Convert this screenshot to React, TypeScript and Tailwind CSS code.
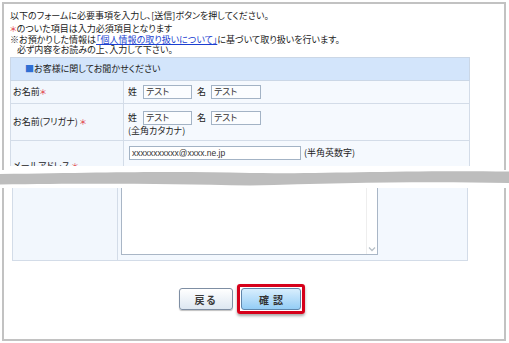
const jp = "font-['Noto_Sans_CJK_JP',sans-serif] [font-feature-settings:'palt']";

function Field({ value, w }: { value: string; w: string }) {
  return (
    <div
      className={`${w} h-[14px] border border-[#a3b3c5] bg-[#fbfdff] pl-[2px] leading-[12px] text-[9px] text-[#333]`}
    >
      {value}
    </div>
  );
}

function Req() {
  return <span className="text-[#e0323a] text-[8px]">＊</span>;
}

function Wave() {
  return (
    <svg width="509" height="18" viewBox="0 0 509 18" className="block">
      <path
        d="M0,4 C120,2 180,1 250,3 C320,4 400,0 509,1.5 L509,13 C420,11 340,13 250,15.5 C170,14 100,13 0,14.5 Z"
        fill="#bdbdbd"
      />
    </svg>
  );
}

export default function App() {
  return (
    <div className={`w-[509px] h-[343px] bg-white overflow-hidden text-[9px] text-[#222] ${jp}`}>
      {/* upper part */}
      <div className="mt-[2px] ml-[2px] w-[504px] h-[168px] border-2 border-b-0 border-[#c2c2c2]">
        <div className="h-[162px] overflow-hidden pl-[6px]">
          <p className="mt-[8px] h-[8px] leading-[8px] whitespace-nowrap">
            以下のフォームに必要事項を入力し、[送信]ボタンを押してください。
          </p>
          <p className="mt-[5px] h-[8px] leading-[8px] whitespace-nowrap">
            <Req />のついた項目は入力必須項目となります
          </p>
          <p className="mt-[3px] h-[8px] leading-[8px] whitespace-nowrap">
            ※お預かりした情報は
            <span className="text-[#1b3fd0] underline">「個人情報の取り扱いについて」</span>
            に基づいて取り扱いを行います。
          </p>
          <p className="mt-[1.5px] h-[8px] leading-[8px] whitespace-nowrap pl-[7px]">
            必ず内容をお読みの上、入力して下さい。
          </p>

          <table className="mt-[3.5px] w-[460px] border-collapse">
            <tbody>
              <tr className="h-[23px] bg-[#d3e5fb]">
                <td colSpan={2} className="border border-[#cbd7e6] pl-[14px] align-middle">
                  <span className="text-[#2f6fd3]">■</span>お客様に関してお聞かせください
                </td>
              </tr>
              <tr className="h-[23px]">
                <td className="w-[113px] border border-[#d3dce8] bg-[#f2f7fd] pl-[2px] align-middle">
                  お名前<Req />
                </td>
                <td className="border border-[#d3dce8] bg-[#f5f9fe] pl-[4px] align-middle">
                  <div className="flex items-center">
                    <span>姓</span>
                    <span className="ml-[6px]"><Field value="テスト" w="w-[49px]" /></span>
                    <span className="ml-[5px]">名</span>
                    <span className="ml-[5px]"><Field value="テスト" w="w-[50px]" /></span>
                  </div>
                </td>
              </tr>
              <tr className="h-[37px]">
                <td className="border border-[#d3dce8] bg-[#f2f7fd] pl-[2px] align-middle">
                  お名前(フリガナ) <Req />
                </td>
                <td className="border border-[#d3dce8] bg-[#f5f9fe] pl-[4px] pt-[7px] align-top">
                  <div className="flex items-center">
                    <span>姓</span>
                    <span className="ml-[6px]"><Field value="テスト" w="w-[49px]" /></span>
                    <span className="ml-[5px]">名</span>
                    <span className="ml-[5px]"><Field value="テスト" w="w-[50px]" /></span>
                  </div>
                  <div className="mt-[1px] leading-[10px]">(全角カタカナ)</div>
                </td>
              </tr>
              <tr className="h-[50px]">
                <td className="border border-[#d3dce8] bg-[#f2f7fd] pl-[2px] align-middle">
                  メールアドレス <Req />
                </td>
                <td className="border border-[#d3dce8] bg-[#f5f9fe] pl-[5px] pt-[5px] align-top">
                  <div className="flex items-center">
                    <div className="w-[172px] h-[14px] border border-[#a3b3c5] bg-white pl-[2px] leading-[12px] text-[8.5px] text-[#333] font-['Liberation_Sans',sans-serif]">
                      xxxxxxxxxxx@xxxx.ne.jp
                    </div>
                    <span className="ml-[3px]">(半角英数字)</span>
                  </div>
                </td>
              </tr>
            </tbody>
          </table>
        </div>
      </div>

      <Wave />

      {/* lower part */}
      <div className="ml-[2px] w-[504px] h-[153px] border-2 border-t-0 border-[#c2c2c2] pl-[8px]">
        <div className="flex w-[456px] h-[73px] border border-t-0 border-[#d3dce8]">
          <div className="w-[105px] border-r border-[#d3dce8] bg-[#f2f7fd]" />
          <div className="flex-1 bg-[#f3f8fe] pl-[3px]">
            <div className="flex w-[257px] h-[67px] border border-t-0 border-[#a9b6c6] bg-white">
              <div className="flex-1" />
              <div className="w-[11px] border-l border-[#eeeeee] flex flex-col justify-end items-center pb-[2px]">
                <svg width="8" height="6" viewBox="0 0 8 6">
                  <path d="M1,1.5 L4,4.5 L7,1.5" fill="none" stroke="#b8c0c8" strokeWidth="1.3" />
                </svg>
              </div>
            </div>
          </div>
        </div>

        <div className="mt-[23px] flex items-center pl-[167px]">
          <div className="w-[54px] h-[22px] rounded-[3px] border border-[#7e8ea3] bg-gradient-to-b from-white to-[#dde7f1] shadow-[0_1px_1px_rgba(0,0,0,0.25)] flex items-center justify-center text-[10px] text-[#3a3a3a] font-bold tracking-[2px]">
            戻る
          </div>
          <div className="ml-[4px] rounded-[3px] border-[3px] border-[#d6001a] p-[1px] shadow-[0_2px_3px_rgba(0,0,0,0.35)]">
            <div className="w-[60px] h-[22px] rounded-[3px] border border-[#5f86ab] bg-gradient-to-b from-[#d8eefd] to-[#94cdf5] flex items-center justify-center text-[10px] text-[#333] font-bold tracking-[4px] pl-[4px]">
              確認
            </div>
          </div>
        </div>
      </div>
    </div>
  );
}
